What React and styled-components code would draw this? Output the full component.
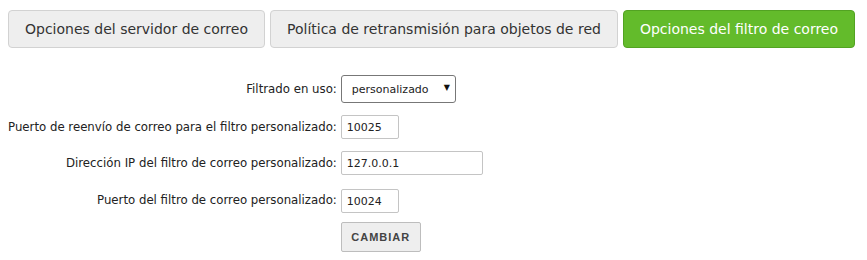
import React from 'react'
import styled, {createGlobalStyle} from 'styled-components'

const GlobalStyle = createGlobalStyle`
  body {
    margin: 0;
    background: #fff;
    font-family: "DejaVu Sans", Verdana, sans-serif;
    color: #222;
  }
`

const Page = styled.div`
  padding: 10px 8px;
`

const TabBar = styled.div`
  display: flex;
  gap: 5px;
`

const Tab = styled.button`
  height: 38px;
  padding: 0 16px;
  white-space: nowrap;
  font-family: "DejaVu Sans", Verdana, sans-serif;
  font-size: 14px;
  border-radius: 4px;
  border: 1px solid ${p => (p.active ? '#52a322' : '#d2d2d2')};
  background: ${p => (p.active ? '#63bb2b' : '#eeeeee')};
  color: ${p => (p.active ? '#fff' : '#333')};
  cursor: pointer;
`

const Form = styled.form`
  display: grid;
  grid-template-columns: max-content max-content;
  column-gap: 4px;
  row-gap: 12px;
  align-items: center;
  margin-top: 27px;
`

const Label = styled.label`
  text-align: right;
  font-size: 11.75px;
  color: #222;
`

const SelectWrap = styled.div`
  position: relative;
  width: 115px;
  height: 28px;
`

const Select = styled.select`
  appearance: none;
  width: 100%;
  height: 100%;
  padding: 0 0 0 10px;
  font-family: "DejaVu Sans", Verdana, sans-serif;
  font-size: 11px;
  color: #222;
  background: #fff;
  border: 1px solid #777;
  border-radius: 3px;
`

const Arrow = styled.span`
  position: absolute;
  right: 6px;
  top: 8px;
  font-size: 8px;
  color: #111;
  pointer-events: none;
`

const Input = styled.input`
  box-sizing: border-box;
  width: ${p => p.w}px;
  height: 24px;
  margin-top: ${p => p.shift || 0}px;
  padding: 0 5px;
  font-family: "DejaVu Sans", Verdana, sans-serif;
  font-size: 11px;
  color: #222;
  border: 1px solid #c4c4c4;
  border-radius: 2px;
  background: #fff;
`

const Button = styled.button`
  grid-column: 2;
  justify-self: start;
  width: 80px;
  height: 30px;
  margin-top: -3px;
  font-family: "Liberation Sans", Arial, sans-serif;
  font-weight: bold;
  font-size: 11px;
  letter-spacing: 1px;
  color: #444;
  background: #eeeeee;
  border: 1px solid #bdbdbd;
  border-radius: 2px;
`

export default function App() {
  return (
    <Page>
      <GlobalStyle />
      <TabBar>
        <Tab>Opciones del servidor de correo</Tab>
        <Tab>Política de retransmisión para objetos de red</Tab>
        <Tab active>Opciones del filtro de correo</Tab>
      </TabBar>
      <Form onSubmit={e => e.preventDefault()}>
        <Label>Filtrado en uso:</Label>
        <SelectWrap>
          <Select defaultValue="personalizado">
            <option value="ninguno">ninguno</option>
            <option value="personalizado">personalizado</option>
          </Select>
          <Arrow>▼</Arrow>
        </SelectWrap>

        <Label>Puerto de reenvío de correo para el filtro personalizado:</Label>
        <Input w={58} defaultValue="10025" />

        <Label>Dirección IP del filtro de correo personalizado:</Label>
        <Input w={142} defaultValue="127.0.0.1" />

        <Label>Puerto del filtro de correo personalizado:</Label>
        <Input w={58} shift={2} defaultValue="10024" />

        <Button type="submit">CAMBIAR</Button>
      </Form>
    </Page>
  )
}
